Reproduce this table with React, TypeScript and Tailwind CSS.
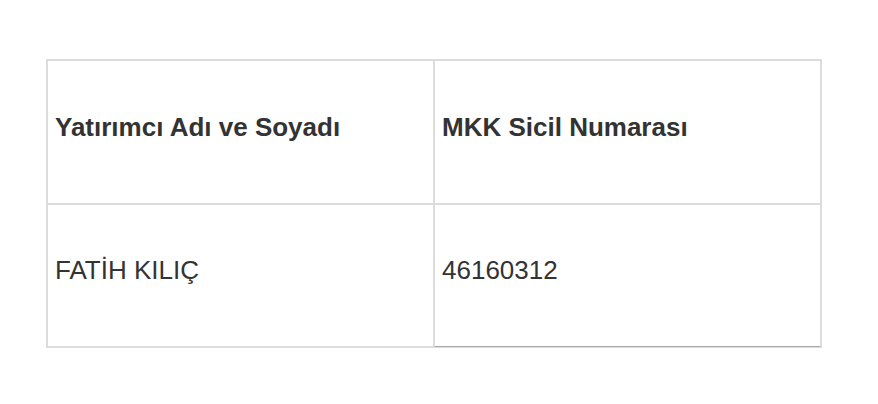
export default function App() {
    return (
        <div className="min-h-[404px] w-[878px] bg-white pt-[59px] pl-[46px]">
            <div className="w-[776px] border border-[#dcdcdc] text-[#333333] font-['Liberation_Sans',Arial,sans-serif] text-[26px]">
                <div className="grid grid-cols-2">
                    <div className="h-[144px] border border-[#dcdcdc] flex items-center pl-[7px] pb-[10px] font-bold">
                        Yatırımcı Adı ve Soyadı
                    </div>
                    <div className="h-[144px] border border-[#dcdcdc] flex items-center pl-[7px] pb-[10px] font-bold">
                        MKK Sicil Numarası
                    </div>
                    <div className="h-[143px] border border-[#dcdcdc] flex items-center pl-[7px] pb-[10px]">
                        FATİH KILIÇ
                    </div>
                    <div className="h-[143px] border border-[#dcdcdc] border-b-[#a8a8a8] flex items-center pl-[7px] pb-[10px]">
                        46160312
                    </div>
                </div>
            </div>
        </div>
    );
}
